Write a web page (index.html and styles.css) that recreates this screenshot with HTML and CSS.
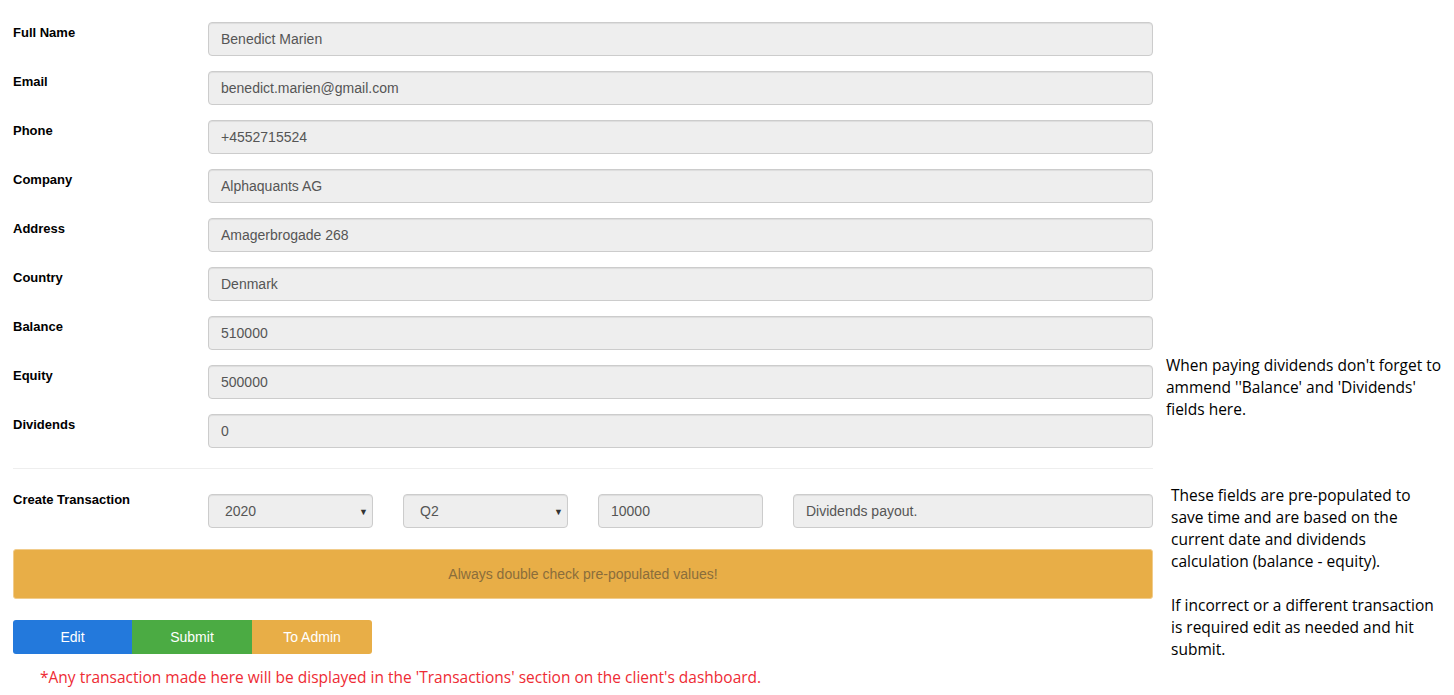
FILE: index.html
```html
<!DOCTYPE html>
<html>
<head>
<meta charset="utf-8">
<link rel="stylesheet" href="styles.css">
</head>
<body>
<div class="page">
  <div class="form">
    <div class="row"><label class="lbl">Full Name</label><div class="field">Benedict Marien</div></div>
    <div class="row"><label class="lbl">Email</label><div class="field">benedict.marien@gmail.com</div></div>
    <div class="row"><label class="lbl">Phone</label><div class="field">+4552715524</div></div>
    <div class="row"><label class="lbl">Company</label><div class="field">Alphaquants AG</div></div>
    <div class="row"><label class="lbl">Address</label><div class="field">Amagerbrogade 268</div></div>
    <div class="row"><label class="lbl">Country</label><div class="field">Denmark</div></div>
    <div class="row"><label class="lbl">Balance</label><div class="field">510000</div></div>
    <div class="row"><label class="lbl">Equity</label><div class="field">500000</div></div>
    <div class="row"><label class="lbl">Dividends</label><div class="field">0</div></div>
    <hr class="sep">
    <div class="row trow">
      <label class="lbl tlbl">Create Transaction</label>
      <div class="tfields">
        <div class="field sel">2020<span class="caret">&#9660;</span></div>
        <div class="field sel">Q2<span class="caret">&#9660;</span></div>
        <div class="field">10000</div>
        <div class="field">Dividends payout.</div>
      </div>
    </div>
    <div class="alert">Always double check pre-populated values!</div>
    <div class="btns">
      <button class="btn blue">Edit</button><button class="btn green">Submit</button><button class="btn orange">To Admin</button>
    </div>
    <p class="warn">*Any transaction made here will be displayed in the 'Transactions' section on the client's dashboard.</p>
  </div>
  <div class="notes">
    <p class="note n1">When paying dividends don't forget to ammend ''Balance' and 'Dividends' fields here.</p>
    <p class="note n2">These fields are pre-populated to save time and are based on the current date and dividends calculation (balance - equity).<br><br>If incorrect or a different transaction is required edit as needed and hit submit.</p>
  </div>
</div>
</body>
</html>
```
FILE: styles.css
```css
html, body { margin: 0; padding: 0; background: #fff; }
body { font-family: "Liberation Sans", Arial, sans-serif; font-size: 14px; color: #333; }
.page { display: flex; padding: 22px 0 0 13px; }
.form { width: 1140px; flex: none; }
.row { display: flex; margin-bottom: 15px; }
.lbl { width: 195px; flex: none; font-weight: bold; font-size: 13px; color: #000; padding-top: 3px; line-height: 15px; }
.tlbl { padding-top: 0; margin-top: -2px; }
.field { flex: 1; box-sizing: border-box; height: 34px; background: #eee; border: 1px solid #ccc; border-radius: 4px; padding: 0 12px; line-height: 32px; color: #555; font-size: 14px; box-shadow: inset 0 1px 1px rgba(0,0,0,.075); position: relative; }
.sep { border: 0; border-top: 1px solid #eee; margin: 20px 0 25px 0; height: 0; }
.trow { margin-bottom: 21px; }
.tfields { flex: 1; display: flex; gap: 30px; }
.tfields .field { flex: none; width: 165px; }
.tfields .field:last-child { width: 360px; }
.sel { padding-left: 16px; }
.caret { position: absolute; right: 4px; top: 1px; font-size: 9px; color: #333; }
.alert { height: 50px; box-sizing: border-box; background: #e8ae47; border: 1px solid #f1cc8c; border-radius: 3px; text-align: center; line-height: 48px; color: #8a6d3b; font-size: 14px; }
.btns { display: flex; margin-top: 21px; }
.btn { border: 0; margin: 0; height: 34px; width: 119px; color: #fff; font-family: "Liberation Sans", Arial, sans-serif; font-size: 14px; padding: 0; }
.btn.green { width: 120px; }
.btn.orange { width: 120px; }
.blue { background: #2379dc; border-radius: 3px 0 0 3px; }
.green { background: #4bab43; }
.orange { background: #e8ae47; border-radius: 0 3px 3px 0; }
.warn { margin: 13px 0 0 27px; font-family: "Open Sans", sans-serif; font-size: 15.5px; color: #ee2b34; line-height: 20px; }
.notes { padding-left: 13px; }
.note { margin: 0; font-family: "Open Sans", sans-serif; font-size: 15.5px; line-height: 22px; color: #000; }
.n1 { margin-top: 332px; width: 286px; }
.n2 { margin-top: 64px; margin-left: 5px; width: 273px; }
```
